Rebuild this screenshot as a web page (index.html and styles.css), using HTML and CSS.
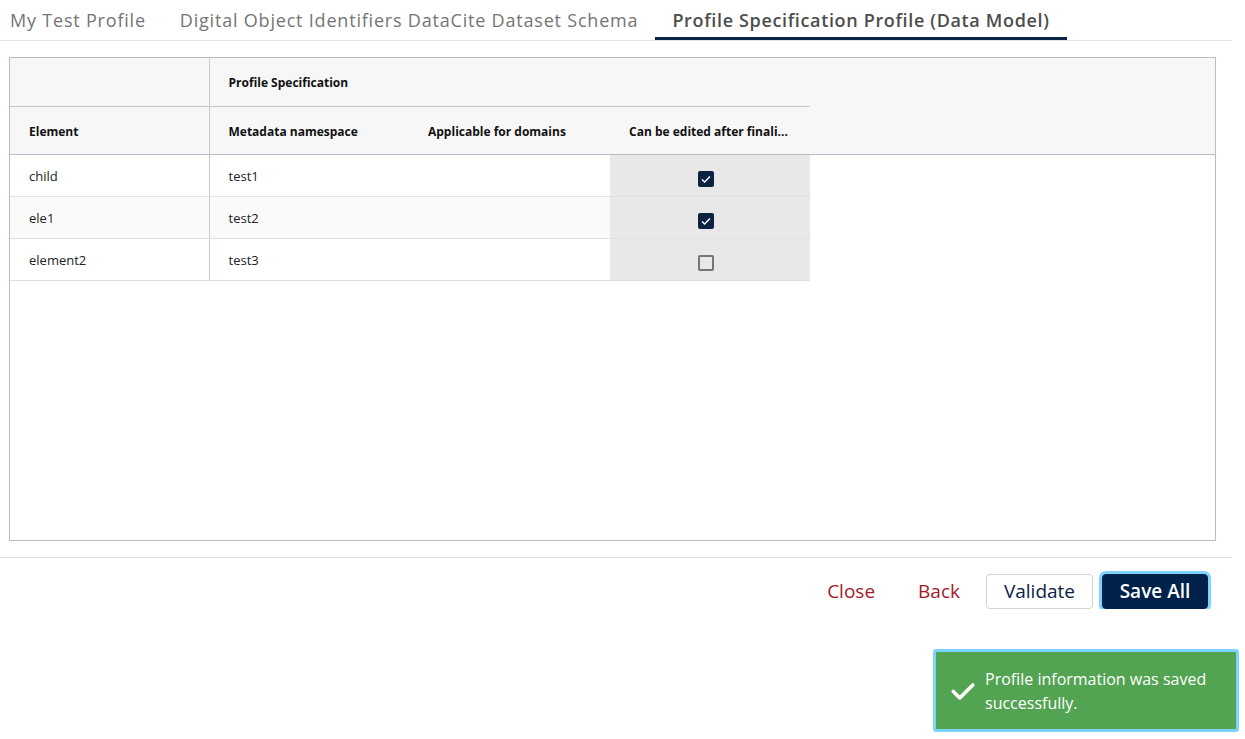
FILE: index.html
```html
<!DOCTYPE html>
<html lang="en">
<head>
<meta charset="utf-8">
<title>Profile Specification</title>
<link rel="stylesheet" href="styles.css">
</head>
<body>
<div class="page">
  <nav class="tabs">
    <div class="tab first">My Test Profile</div>
    <div class="tab">Digital Object Identifiers DataCite Dataset Schema</div>
    <div class="tab active">Profile Specification Profile (Data Model)</div>
  </nav>

  <section class="grid-box">
    <table class="grid">
      <colgroup>
        <col class="c199"><col class="c200"><col class="c201"><col class="c200"><col>
      </colgroup>
      <thead>
        <tr class="group-row">
          <th class="div-right"></th>
          <th colspan="3" class="group">Profile Specification</th>
          <th class="filler"></th>
        </tr>
        <tr class="head-row">
          <th class="div-right">Element</th>
          <th>Metadata namespace</th>
          <th>Applicable for domains</th>
          <th title="Can be edited after finalization">Can be edited after finali...</th>
          <th class="filler"></th>
        </tr>
      </thead>
      <tbody>
        <tr>
          <td class="div-right">child</td>
          <td>test1</td>
          <td></td>
          <td class="check-cell"><span class="cb on"><svg viewBox="0 0 16 16"><path d="M4 8.4l2.6 2.5L12 5.4"/></svg></span></td>
          <td class="empty"></td>
        </tr>
        <tr class="alt">
          <td class="div-right">ele1</td>
          <td>test2</td>
          <td></td>
          <td class="check-cell"><span class="cb on"><svg viewBox="0 0 16 16"><path d="M4 8.4l2.6 2.5L12 5.4"/></svg></span></td>
          <td class="empty"></td>
        </tr>
        <tr>
          <td class="div-right">element2</td>
          <td>test3</td>
          <td></td>
          <td class="check-cell"><span class="cb off"></span></td>
          <td class="empty"></td>
        </tr>
      </tbody>
    </table>
  </section>

  <footer class="actions">
    <button class="btn link">Close</button>
    <button class="btn link">Back</button>
    <button class="btn outline">Validate</button>
    <button class="btn primary">Save All</button>
  </footer>
</div>

<div class="toast">
  <svg class="toast-icon" viewBox="0 0 24 24"><path d="M3 12.5l6 6L21 6.5"/></svg>
  <div class="toast-text">Profile information was saved successfully.</div>
</div>
</body>
</html>
```

FILE: styles.css
```css
* { box-sizing: border-box; }

body {
  margin: 0;
  font-family: "Open Sans", "Noto Sans", sans-serif;
  background: #ffffff;
  color: #222;
}

.page {
  width: 1232px;
}

.tabs {
  display: flex;
  height: 41px;
  border-bottom: 1px solid #e3e3e3;
}

.tab {
  height: 40px;
  padding: 0 17px 1px;
  display: flex;
  align-items: center;
  font-size: 18px;
  letter-spacing: 0.8px;
  color: #757575;
  white-space: nowrap;
}

.tab.first { padding-left: 10px; }

.tab.active {
  color: #4d4d4d;
  font-weight: 600;
  letter-spacing: 0.65px;
  box-shadow: inset 0 -3px 0 #0d2447;
}

.grid-box {
  margin: 16px 0 0 9px;
  width: 1207px;
  height: 484px;
  border: 1px solid #babbc8;
  background: #fff;
}

.grid {
  border-collapse: collapse;
  table-layout: fixed;
  width: 100%;
  font-size: 12px;
}

.c199 { width: 199px; }
.c200 { width: 200px; }
.c201 { width: 201px; }

.grid th {
  background: #f7f7f7;
  text-align: left;
  font-weight: 700;
  color: #111;
  padding: 2px 19px 0;
  white-space: nowrap;
}

.group-row th { height: 48px; }
.group-row .group { border-bottom: 1px solid #c5c6d0; }
.group-row .div-right { border-bottom: 1px solid #c5c6d0; }

.head-row th {
  height: 48px;
  border-bottom: 1px solid #babbc8;
}

.div-right { border-right: 1px solid #c9cad3; }

.grid td {
  height: 42px;
  padding: 2px 19px 0;
  font-size: 13px;
  color: #222;
  border-bottom: 1px solid #dde1e7;
  white-space: nowrap;
}

.grid tr.alt td { background: #fafafa; }

.grid td.empty {
  border-bottom: none;
  background: #fff !important;
}

.grid td.check-cell {
  background: #e8e8e8 !important;
  text-align: center;
  padding: 6px 27px 0 19px;
}

.cb {
  display: inline-block;
  width: 16px;
  height: 16px;
  border-radius: 2px;
  vertical-align: middle;
}

.cb.on { background: #0b2245; }
.cb.on svg { width: 16px; height: 16px; display: block; }
.cb.on path { fill: none; stroke: #fff; stroke-width: 1.4; }

.cb.off {
  border: 2px solid #767676;
  background: #fff0;
}

.actions {
  margin-top: 16px;
  border-top: 1px solid #e3e3e3;
  display: flex;
  justify-content: flex-end;
  gap: 9px;
  padding: 16px 24px 0 0;
}

.btn {
  height: 35px;
  padding: 0 16px;
  font-family: "Open Sans", sans-serif;
  font-size: 19px;
  border-radius: 4px;
  background: transparent;
  border: 1px solid transparent;
  cursor: pointer;
  line-height: 1;
}

.btn.link { color: #a31a2e; }

.btn.outline {
  border-color: #d4d4d4;
  color: #0b2245;
  width: 107px;
}

.btn.primary {
  background: #00214a;
  border-color: #00214a;
  color: #fff;
  font-weight: 600;
  width: 106px;
  box-shadow: 0 0 0 3px #7dd3fc;
}

.toast {
  position: absolute;
  left: 933px;
  top: 649px;
  width: 306px;
  height: 83px;
  background: #52a452;
  border: 3px solid #7dd3fc;
  border-radius: 3px;
  display: flex;
  align-items: center;
  padding: 0 16px 0 14px;
  gap: 9px;
  color: #fff;
}

.toast-icon {
  width: 26px;
  height: 26px;
  flex: none;
}
.toast-icon path {
  fill: none;
  stroke: #fff;
  stroke-width: 3.4;
  stroke-linecap: round;
  stroke-linejoin: round;
}

.toast-text {
  font-size: 16px;
  line-height: 24px;
}
```
